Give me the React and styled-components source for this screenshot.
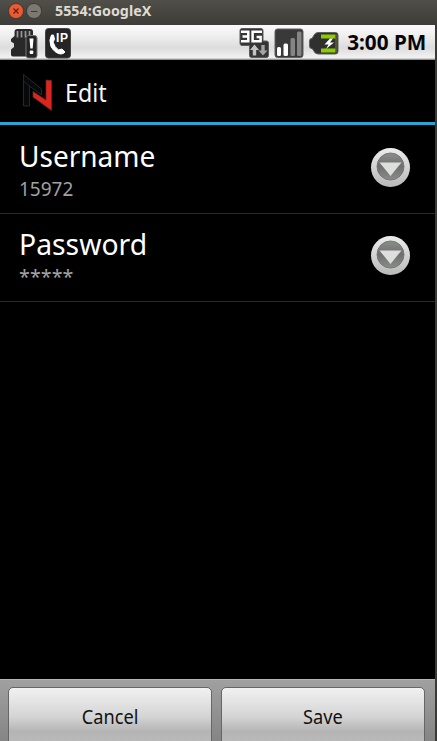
import styled, { createGlobalStyle } from "styled-components";
import { useState } from "react";

const GlobalStyle = createGlobalStyle`
  body {
    margin: 0;
    background: #000;
    overflow: hidden;
  }
`;

const Emulator = styled.div`
  display: flex;
  flex-direction: column;
  width: 437px;
  height: 741px;
  background: #000;
  font-family: "Noto Sans", "Open Sans", sans-serif;
`;

const TitleBar = styled.div`
  display: flex;
  align-items: center;
  flex: none;
  box-sizing: border-box;
  height: 25px;
  padding: 0 0 3px 8px;
  background: linear-gradient(#504f49, #3d3c38);
`;

const WindowButton = styled.svg`
  width: 16px;
  height: 16px;
  margin-right: 2px;
`;

const Label = styled.span`
  display: inline-block;
  font-size: ${(props) => props.$size}px;
  line-height: ${(props) => props.$line}px;
  color: ${(props) => props.$color};
  font-weight: ${(props) => (props.$bold ? 700 : 400)};
  white-space: nowrap;
  transform: scaleX(${(props) => props.$narrow || 1});
  transform-origin: ${(props) => props.$origin || "left"};
`;

const WindowTitle = styled.div`
  display: flex;
  margin-left: 11px;
`;

const Screen = styled.div`
  display: flex;
  flex: 1;
  flex-direction: column;
  border-right: 2px solid #3a3a38;
  min-height: 0;
`;

const StatusBar = styled.div`
  display: flex;
  align-items: center;
  flex: none;
  box-sizing: border-box;
  height: 35px;
  padding: 0 9px 0 10px;
  background: linear-gradient(#fafafa, #efefef 30%, #dcdcdc 65%, #f2f2f2 94%, #777);
`;

const StatusIcon = styled.svg`
  flex: none;
  width: 30px;
  height: 32px;
  margin-right: ${(props) => props.$gap || 4}px;
`;

const Spacer = styled.div`
  flex: 1;
`;

const Header = styled.div`
  display: flex;
  align-items: center;
  flex: none;
  box-sizing: border-box;
  height: 65px;
  margin-bottom: 1px;
  padding: 2px 0 0 22px;
  border-bottom: 3px solid #2ba4d3;
`;

const Logo = styled.svg`
  width: 32px;
  height: 40px;
  margin-right: 11px;
`;

const Row = styled.div`
  display: flex;
  align-items: center;
  flex: none;
  box-sizing: border-box;
  height: 88px;
  padding: 0 24px 0 19px;
  border-bottom: 1px solid #2b2b2b;
  cursor: pointer;
`;

const RowText = styled.div`
  display: flex;
  flex: 1;
  flex-direction: column;
  align-items: flex-start;
`;

const MoreIcon = styled.svg`
  width: 41px;
  height: 41px;
  margin-top: -5px;
`;

const Footer = styled.div`
  display: flex;
  flex: none;
  gap: 9px;
  box-sizing: border-box;
  height: 62px;
  padding: 7px 10px 0 8px;
  border-top: 1px solid #b5b5b5;
  background: linear-gradient(#a0a0a0, #858585);
`;

const FooterButton = styled.button`
  flex: 1;
  height: 60px;
  padding: 0;
  border: 1px solid #666;
  border-radius: 5px;
  background: linear-gradient(#f1f1f1, #d4d4d4 50%, #b4b4b4 75%, #bbb);
  font-family: inherit;
  cursor: pointer;
`;

const CloseGlyph = () => (
  <WindowButton viewBox="0 0 16 16">
    <circle cx="8" cy="8" r="7.5" fill="#ed5a31" stroke="#31302c" strokeWidth=".7" />
    <path d="M5.500 5.500l5 5M10.500 5.500l-5 5" stroke="#592313" strokeWidth="1.2" />
  </WindowButton>
);

const MinimizeGlyph = () => (
  <WindowButton viewBox="0 0 16 16">
    <circle cx="8" cy="8" r="7.500" fill="#7b7971" stroke="#31302c" strokeWidth=".7" />
    <path d="M5 8.500h6.500" stroke="#393832" strokeWidth="1" />
  </WindowButton>
);

const SdCardIcon = () => (
  <StatusIcon viewBox="0 0 30 32">
    <path d="M7.500 2H20q3 0 3 2.500V27q0 2.500-2 2.500H3q-2 0-2-2V22.500l3-2.500v-3.500l-3-2V12l3.500-3V5q0-3 3-3z" fill="#292929" />
    <path d="M7.500 4v6.500M11.500 4v6.500M15.500 4v6.500M19.500 4v5" stroke="#999" strokeWidth="1.700" />
    <rect x="16" y="8.500" width="11" height="22.500" rx="2.500" fill="#252525" stroke="#777" />
    <path d="M19.500 11.500h4l-.8 10h-2.400z" fill="#fff" />
    <rect x="19.700" y="23.500" width="3.600" height="3.500" rx="1" fill="#fff" />
  </StatusIcon>
);

const IpCallIcon = () => (
  <StatusIcon viewBox="0 0 30 32">
    <rect x="1.500" y="1.500" width="25" height="29.500" rx="3" fill="#252525" stroke="#454545" />
    <path
      d="M7.500 8Q4.500 13 7 19.500Q10.500 26 16.500 27Q19.500 27 21 25L18 22L14.500 23Q10.500 20 9 15L10.500 12.500L9.500 8Z"
      fill="#fff"
      stroke="#fff"
      strokeLinejoin="round"
    />
    <text
      x="12"
      y="15"
      fontFamily="Liberation Sans, sans-serif"
      fontSize="12"
      fontWeight="700"
      fill="#fff"
      textLength="12"
    >
      IP
    </text>
  </StatusIcon>
);

const NetworkIcon = () => (
  <StatusIcon viewBox="0 0 30 32" $gap={5}>
    <path d="M3 1.500h19q2 0 2 2v10.500h3.500q2 0 2 2v12.500q0 2-2 2h-15q-2 0-2-2V18.500H3q-2 0-2-2v-13q0-2 2-2z" fill="#353535" stroke="#5c5c5c" />
    <path d="M2 4.700h7.300v9.600H2M3.500 9.500h5.800M23 4.700h-9.400v9.600h8V10h-4" fill="none" stroke="#fff" strokeWidth="2.500" />
    <path d="M15.500 17.500l4.500 5.500h-2.800v5.500h-3.400V23H11z" fill="#c4c4c4" />
    <path d="M24 28.500L19.500 23.500h2.800V18h3.400v5.500h2.800z" fill="#a3a3a3" />
  </StatusIcon>
);

const SignalIcon = () => (
  <StatusIcon viewBox="0 0 30 32" $gap={5}>
    <rect x="1" y="2" width="28" height="28.500" rx="2.500" fill="#393939" stroke="#606060" />
    <rect x="3" y="20" width="4" height="9" rx="1.500" fill="#fff" />
    <rect x="9.500" y="16.500" width="4.500" height="12.500" rx="1.500" fill="#fff" />
    <rect x="16.500" y="11" width="4.500" height="18" rx="1.500" fill="#858585" />
    <rect x="23" y="4.500" width="4.500" height="24.500" rx="1.500" fill="#858585" />
  </StatusIcon>
);

const BatteryIcon = () => (
  <StatusIcon viewBox="0 0 30 32" $gap={7}>
    <path d="M9 5.500h17.500q2.500 0 2.500 2.500v16.500q0 2.500-2.500 2.500H9Q6 27 4.500 23.500L3 21.500H2Q.5 21 .5 19v-5Q.5 12 2 11.500h1l1.500-2.500Q6 5.500 9 5.500z" fill="#303030" stroke="#606060" />
    <path d="M12 7.500h14.500v4H12zM12 21.500h14.500v4H12z" fill="#8bcb00" />
    <path d="M27 7.500v18" stroke="#65733b" strokeWidth="1.200" />
    <path d="M21 11.500l-5.500 6h4l-2.500 4.500 8-6.500h-4l3-4z" fill="#fff" />
  </StatusIcon>
);

const MoreButton = ({ id }) => (
  <MoreIcon viewBox="0 0 41 41">
    <defs>
      <linearGradient id={`ring-${id}`} x2="0" y2="1">
        <stop offset="0" stopColor="#ededed" />
        <stop offset="1" stopColor="#b9b9b9" />
      </linearGradient>
      <linearGradient id={`disc-${id}`} x2="0" y2="1">
        <stop offset="0" stopColor="#8c8e8c" />
        <stop offset=".5" stopColor="#6d706d" />
        <stop offset="1" stopColor="#8b8d8b" />
      </linearGradient>
    </defs>
    <circle cx="20.500" cy="20.500" r="19.500" fill={`url(#ring-${id})`} />
    <circle cx="20.500" cy="19.500" r="13.500" fill={`url(#disc-${id})`} stroke="#777" />
    <path d="M9.500 15.500h22L20.500 29z" fill="#dedede" />
  </MoreIcon>
);

const NLogo = () => (
  <Logo viewBox="0 0 32 40">
    <path d="M1.500 2.500L19.500 17v6L7.500 14v20H1.500z" fill="#08090b" stroke="#303132" strokeWidth=".8" />
    <path d="M1.500 9l6 5" stroke="#27282a" strokeWidth=".8" />
    <path d="M24 8l5.500.5v30L11 25v-5.500l13 8.500z" fill="#de241f" stroke="#6f2926" strokeWidth=".7" />
  </Logo>
);

const fields = [
  { id: 1, name: "Username", value: "15972", narrow: 0.95, valueNarrow: 0.926 },
  { id: 2, name: "Password", value: "*****", narrow: 0.96, valueNarrow: 0.965 },
];

function App() {
  const [rows] = useState(fields);

  return (
    <Emulator>
      <GlobalStyle />
      <TitleBar>
        <CloseGlyph />
        <MinimizeGlyph />
        <WindowTitle>
          <Label $size={14} $line={22} $color="#dfdbd2" $bold $narrow={1.02}>
            5554:GoogleX
          </Label>
        </WindowTitle>
      </TitleBar>
      <Screen>
        <StatusBar>
          <SdCardIcon />
          <IpCallIcon />
          <Spacer />
          <NetworkIcon />
          <SignalIcon />
          <BatteryIcon />
          <Label $size={21} $line={35} $color="#050505" $bold $narrow={0.985} $origin="right">
            3:00 PM
          </Label>
        </StatusBar>
        <Header>
          <NLogo />
          <Label $size={25} $line={34} $color="#f4f4f4" $narrow={0.93}>
            Edit
          </Label>
        </Header>
        {rows.map((row) => (
          <Row key={row.id}>
            <RowText>
              <Label $size={29.5} $line={38} $color="#fff" $narrow={row.narrow}>
                {row.name}
              </Label>
              <Label $size={20.5} $line={27} $color="#a0a0a0" $narrow={row.valueNarrow}>
                {row.value}
              </Label>
            </RowText>
            <MoreButton id={row.id} />
          </Row>
        ))}
        <Spacer />
        <Footer>
          <FooterButton>
            <Label $size={20} $line={28} $color="#111" $narrow={0.91} $origin="center">
              Cancel
            </Label>
          </FooterButton>
          <FooterButton>
            <Label $size={20} $line={28} $color="#111" $narrow={0.91} $origin="center">
              Save
            </Label>
          </FooterButton>
        </Footer>
      </Screen>
    </Emulator>
  );
}

export default App;
